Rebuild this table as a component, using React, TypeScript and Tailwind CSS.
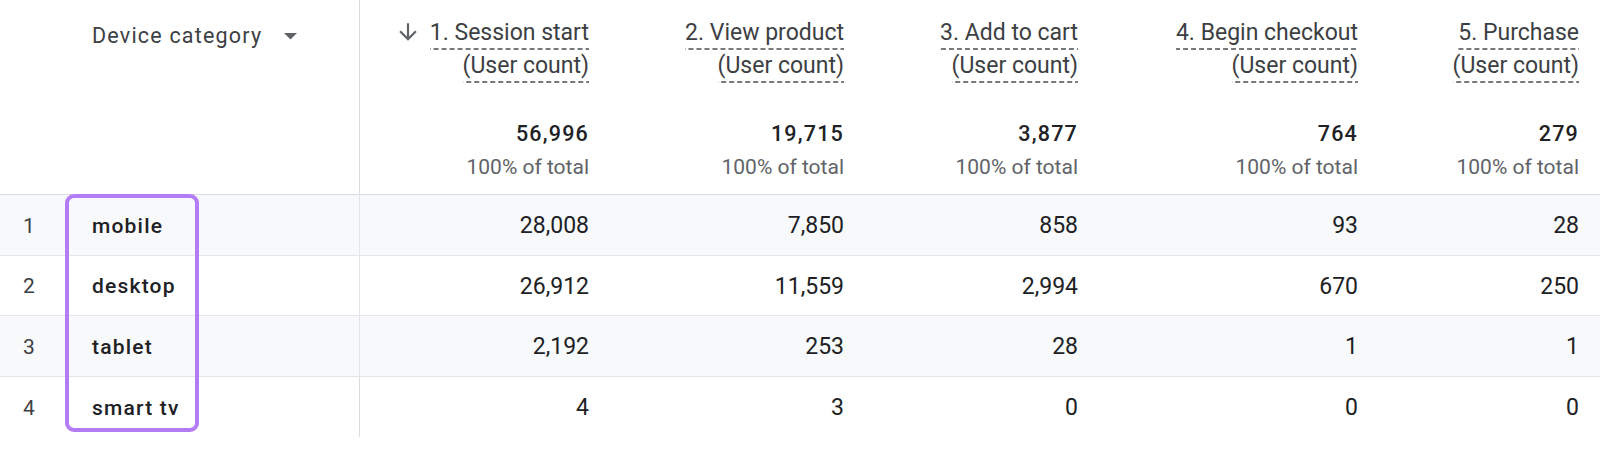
const columns = [
  { step: '1. Session start', total: '56,996', sorted: true },
  { step: '2. View product', total: '19,715' },
  { step: '3. Add to cart', total: '3,877' },
  { step: '4. Begin checkout', total: '764' },
  { step: '5. Purchase', total: '279' },
]

const rows = [
  { name: 'mobile', values: ['28,008', '7,850', '858', '93', '28'] },
  { name: 'desktop', values: ['26,912', '11,559', '2,994', '670', '250'] },
  { name: 'tablet', values: ['2,192', '253', '28', '1', '1'] },
  { name: 'smart tv', values: ['4', '3', '0', '0', '0'] },
]

const dashed =
  'inline-block text-[23px] leading-[26px] pb-[4px] bg-[linear-gradient(to_right,#757a7f_5px,transparent_5px)] bg-size-[8px_2px] bg-repeat-x bg-bottom'

function ArrowDown() {
  return (
    <svg width="26" height="26" viewBox="0 0 24 24" className="fill-[#5f6368] mr-[9px] -mt-[1px] shrink-0">
      <path d="M20 12l-1.41-1.41L13 16.17V4h-2v12.17l-5.58-5.59L4 12l8 8 8-8z" />
    </svg>
  )
}

function StepHeader({ step, total, sorted }: { step: string; total: string; sorted?: boolean }) {
  return (
    <div className="flex flex-col items-end pr-[21px] pt-[20px] h-[195px] border-b border-[#dadce0]">
      <div className="flex items-start h-[30px]">
        {sorted && <ArrowDown />}
        <span className={dashed}>{step}</span>
      </div>
      <span className={`${dashed} mt-[3px]`}>(User count)</span>
      <span className="mt-[38px] leading-[26px] text-[21.5px] font-medium text-[#202124] tracking-[1.2px]">{total}</span>
      <span className="mt-[7px] leading-[26px] text-[21px] text-[#5f6368]">100% of total</span>
    </div>
  )
}

export default function App() {
  return (
    <div className="w-[1600px] h-[452px] bg-white font-['Roboto',sans-serif] text-[#3c4043]">
      <div className="relative grid grid-cols-[360px_250px_255px_234px_280px_221px]">
        {/* dimension header */}
        <div className="h-[195px] border-b border-r border-[#dadce0] pt-[23px] pl-[92px] flex items-start">
          <div className="flex items-center h-[26px] gap-[22px]">
            <span className="text-[21.5px] tracking-[1.2px] text-[#3c4043]">Device category</span>
            <svg width="13" height="7" viewBox="0 0 13 7" className="fill-[#5f6368]">
              <polygon points="0,0 13,0 6.5,6.5" />
            </svg>
          </div>
        </div>
        {columns.map((c) => (
          <StepHeader key={c.step} {...c} />
        ))}

        {rows.map((r, i) => {
          const bg = i % 2 === 0 ? 'bg-[#f8f9fa]' : 'bg-white'
          const line = i < rows.length - 1 ? 'border-b border-[#e3e5e8]' : ''
          return [
            <div key={r.name} className={`flex items-center pt-[3px] h-[60.5px] border-r border-[#dadce0] ${bg} ${line}`}>
              <span className="w-[58px] text-center text-[21px] text-[#3c4043]">{i + 1}</span>
              <span className="pl-[34px] text-[21px] font-medium tracking-[1.2px] text-[#202124]">{r.name}</span>
            </div>,
            ...r.values.map((v, j) => (
              <div
                key={r.name + j}
                className={`flex items-center justify-end pr-[21px] pt-[3px] h-[60.5px] text-[23px] text-[#202124] ${bg} ${line}`}
              >
                {v}
              </div>
            )),
          ]
        })}

        {/* highlight around the device names */}
        <div className="absolute left-[65px] top-[194px] w-[134px] h-[238px] rounded-[9px] border-4 border-[#b47cf4] pointer-events-none" />
      </div>
    </div>
  )
}
